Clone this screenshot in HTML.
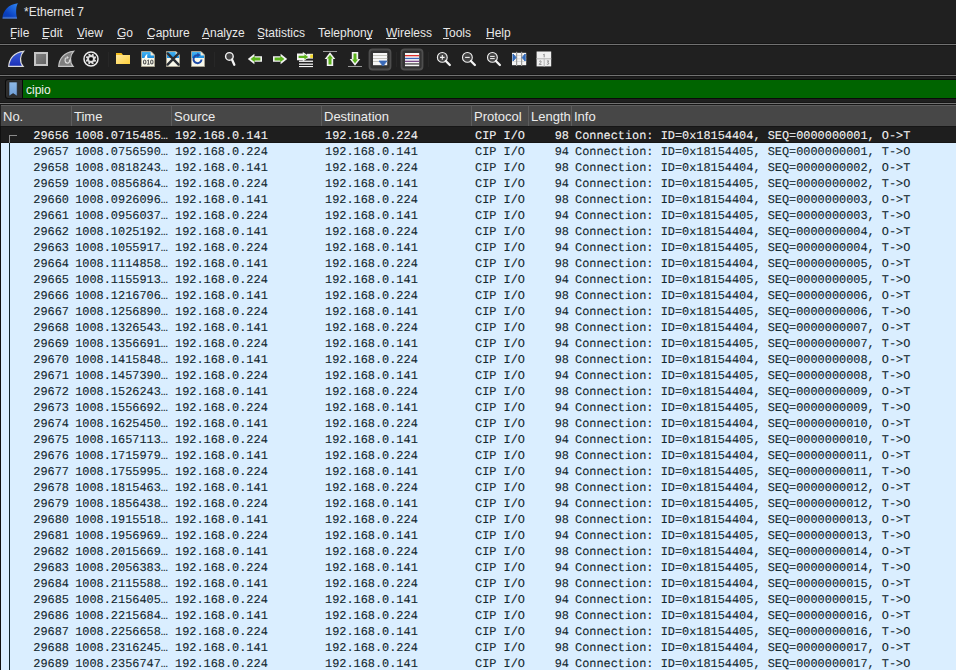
<!DOCTYPE html>
<html><head><meta charset="utf-8">
<style>
html,body{margin:0;padding:0}
body{width:956px;height:670px;overflow:hidden;position:relative;background:#202020;font-family:"Liberation Sans",sans-serif;font-size:12px;color:#e8e8e8}
.a{position:absolute;white-space:nowrap}
.title{left:24px;top:4px;-webkit-font-smoothing:antialiased;line-height:16px;font-size:12px;color:#e6e6e6}
.m{position:absolute;top:27px;line-height:12px;font-size:12px;color:#e8e8e8;white-space:nowrap}
.u{position:absolute;height:1px;background:#e0e0e0;top:38px}
.hl{position:absolute;left:0;width:956px;height:1px;background:#727272;box-shadow:0 -1px 0 #161616,0 1px 0 #161616}
.tb{position:absolute;top:45px;height:30px;left:0;width:956px;background:#202020}
.sep{position:absolute;top:52px;width:1px;height:15px;background:#2c2c2c}
.ic{position:absolute}
.filter{position:absolute;left:5px;top:79px;width:960px;height:20px;background:#0a0a0a;border-radius:3px}
.bm{position:absolute;left:6px;top:80px;width:16px;height:18px;background:#2e2e2e;border-radius:2px 0 0 2px}
.green{position:absolute;left:23px;top:80px;width:940px;height:18px;background:#006400}
.ftxt{position:absolute;left:26px;top:82px;line-height:16px;font-size:12px;color:#f0f0f0}
.hdr{position:absolute;left:1px;top:105px;width:955px;height:21px;background:#474747;border-top:1px solid #5e5e5e;box-sizing:border-box}
.hc{position:absolute;top:0px;height:20px;line-height:21px;font-size:13px;color:#ececec;padding-left:3px;box-sizing:border-box}
.hd{position:absolute;top:-1px;width:1px;height:21px;background:#5d5d5d}
.tbl{position:absolute;left:0;top:126px;width:956px;height:544px;background:#101010}
.r{position:absolute;left:1px;width:955px;height:16px;background:#daeeff;color:#12272e;font-family:"Liberation Mono",monospace;font-size:11.9px;line-height:16px;-webkit-text-stroke:0.1px currentColor;text-rendering:geometricPrecision}
.r.sel{background:#1e1e1e;color:#f2f2f2;height:17px;box-shadow:inset 0 1px 0 #161616,inset 0 -1px 0 #161616}
.r.sel .c{top:2px}
.c{position:absolute;top:1px;white-space:pre}
.no{right:auto;left:0;width:68px;text-align:right}
.tm{left:74.2px}
.sr{left:174px}
.ds{left:324px}
.pr{left:474px}
.ln{left:500px;width:68px;text-align:right}
.nf{left:574px}
.tree{position:absolute;left:9px;width:1px;background:#12272e}
</style></head><body>
<!-- title bar -->
<svg class="ic" style="left:0;top:0" width="22" height="22" viewBox="0 0 22 22">
<defs><linearGradient id="fg1" x1="1" y1="0" x2="0.2" y2="1"><stop offset="0" stop-color="#2f86f4"/><stop offset="0.75" stop-color="#0a40c0"/><stop offset="1" stop-color="#0a3cb0"/></linearGradient>
<linearGradient id="fg1b" x1="0" y1="0" x2="0" y2="1"><stop offset="0" stop-color="#5d8ee0" stop-opacity="0"/><stop offset="1" stop-color="#7aa4e8" stop-opacity="0.8"/></linearGradient></defs>
<path d="M2.3 18.4 C3 11, 8 4.5, 17.9 3.3 C16 6, 15.6 13, 17.1 18.4 Z" fill="url(#fg1)"/>
<path d="M2.6 18.4 L3 16.2 H16.7 L17.1 18.4 Z" fill="url(#fg1b)"/>
</svg>
<div class="a title">*Ethernet 7</div>
<!-- menu -->
<div class="m" style="left:10px">File</div><div class="u" style="left:11px;width:5px"></div>
<div class="m" style="left:42px">Edit</div><div class="u" style="left:42px;width:6px"></div>
<div class="m" style="left:77px">View</div><div class="u" style="left:77px;width:7px"></div>
<div class="m" style="left:117px">Go</div><div class="u" style="left:117px;width:8px"></div>
<div class="m" style="left:147px">Capture</div><div class="u" style="left:147px;width:7px"></div>
<div class="m" style="left:202px">Analyze</div><div class="u" style="left:202px;width:7px"></div>
<div class="m" style="left:257px">Statistics</div><div class="u" style="left:258px;width:6px"></div>
<div class="m" style="left:318px">Telephony</div><div class="u" style="left:366px;width:6px"></div>
<div class="m" style="left:386px">Wireless</div><div class="u" style="left:386px;width:11px"></div>
<div class="m" style="left:443px">Tools</div><div class="u" style="left:443px;width:6px"></div>
<div class="m" style="left:486px">Help</div><div class="u" style="left:486px;width:8px"></div>
<div class="hl" style="top:44px"></div>
<!-- toolbar -->
<svg class="ic" style="left:0;top:45px" width="956" height="30" viewBox="0 45 956 30">
<defs>
<linearGradient id="tfin" x1="0" y1="0" x2="0" y2="1"><stop offset="0" stop-color="#3d5fd8"/><stop offset="1" stop-color="#1a2fb8"/></linearGradient>
<linearGradient id="tstop" x1="0" y1="0" x2="1" y2="1"><stop offset="0" stop-color="#868686"/><stop offset="1" stop-color="#626262"/></linearGradient>
<linearGradient id="tfold" x1="0" y1="0" x2="1" y2="1"><stop offset="0" stop-color="#ffe9a0"/><stop offset="1" stop-color="#ffd03a"/></linearGradient>
<linearGradient id="tdocb" x1="0" y1="0" x2="0" y2="1"><stop offset="0" stop-color="#45b4f2"/><stop offset="1" stop-color="#1b8fe0"/></linearGradient>
</defs>
<!-- start capture fin -->
<path d="M8.7 66.4 C9.2 59 13.8 52.2 23.6 51.3 C20 55 19.2 62 23.1 66.4 Z" fill="url(#tfin)" stroke="#dcdcdc" stroke-width="1.2"/>
<!-- stop -->
<rect x="35" y="53" width="12" height="12" fill="url(#tstop)" stroke="#c6c6c6" stroke-width="2"/>
<!-- restart fin grey -->
<path d="M58.7 66.4 C59.2 59 63.8 52.2 73.6 51.3 C70 55 69.2 62 73.1 66.4 Z" fill="#7e7e7e" stroke="#c4c4c4" stroke-width="1.2"/>
<path d="M66.5 57.5 C64.5 58.5 64.5 62.5 67 63 C69 63.3 70 61.5 69.5 59.5" fill="none" stroke="#d8d8d8" stroke-width="1.3"/>
<path d="M66.8 55.8 L68.8 57.6 L66.6 59.2 Z" fill="#d8d8d8"/>
<!-- options gear -->
<circle cx="91" cy="59" r="7" fill="none" stroke="#ededed" stroke-width="1.5"/>
<path d="M89.95 53.81 L92.05 53.81 L92.26 55.31 L93.15 55.75 L93.93 54.58 L95.42 56.07 L94.50 57.28 L94.82 58.22 L96.19 57.95 L96.19 60.05 L94.69 60.26 L94.25 61.15 L95.42 61.93 L93.93 63.42 L92.72 62.50 L91.78 62.82 L92.05 64.19 L89.95 64.19 L89.74 62.69 L88.85 62.25 L88.07 63.42 L86.58 61.93 L87.50 60.72 L87.18 59.78 L85.81 60.05 L85.81 57.95 L87.31 57.74 L87.75 56.85 L86.58 56.07 L88.07 54.58 L89.28 55.50 L90.22 55.18 Z" fill="#dedede" transform="rotate(22.5 91 59)"/>
<rect x="89.2" y="57.2" width="3.6" height="3.6" rx="1" fill="#0c0c0c"/>
<!-- separator -->
<rect x="108" y="52" width="1" height="15" fill="#272727"/>
<!-- open folder -->
<path d="M116 53 H121.5 L123 55 H130 V64 H116 Z" fill="#f6bf1e"/>
<rect x="116" y="55" width="14" height="9" fill="url(#tfold)"/>
<!-- save (010) -->
<path d="M141.5 51.5 H151 L154.5 55 V66.5 H141.5 Z" fill="#f8f8ea" stroke="#a8a290" stroke-width="1"/>
<path d="M142 52 H150.8 V55.2 H154 V58 H142 Z" fill="url(#tdocb)"/>
<path d="M150.8 52 L154 55.2 H150.8 Z" fill="#f4ecd8"/>
<path d="M144.5 58 C145 56 146 54.5 147.5 54 C147 55.5 147 57 147.5 58 Z" fill="#ffffff"/>
<ellipse cx="144.7" cy="62" rx="1.25" ry="2" fill="none" stroke="#555" stroke-width="1.1"/>
<path d="M147.3 60.7 L148.4 59.9 V64.1 M147.2 64.2 H149.6" fill="none" stroke="#555" stroke-width="1"/>
<ellipse cx="151.8" cy="62" rx="1.25" ry="2" fill="none" stroke="#555" stroke-width="1.1"/>
<!-- close file -->
<path d="M166.5 51.5 H176 L179.5 55 V66.5 H166.5 Z" fill="#f8f8ea" stroke="#a8a290" stroke-width="1"/>
<path d="M167 52 H175.8 V55.2 H179 V58 H167 Z" fill="url(#tdocb)"/>
<path d="M175.8 52 L179 55.2 H175.8 Z" fill="#f4ecd8"/>
<path d="M167.6 53.4 L178.6 64.6 M178.6 53.4 L167.6 64.6" stroke="#2a2e33" stroke-width="2.4" stroke-linecap="round"/>
<!-- reload -->
<path d="M191.5 51.5 H201 L204.5 55 V66.5 H191.5 Z" fill="#f8f8ea" stroke="#a8a290" stroke-width="1"/>
<path d="M192 52 H200.8 V55.2 H204 V58 H192 Z" fill="url(#tdocb)"/>
<path d="M200.8 52 L204 55.2 H200.8 Z" fill="#f4ecd8"/>
<path d="M201.5 59.5 A4 4 0 1 1 198.2 55.2" fill="none" stroke="#1d4aa6" stroke-width="2"/>
<path d="M197.3 52.8 L200.6 55.1 L197.3 57.6 Z" fill="#1d4aa6"/>
<!-- separator -->
<rect x="214" y="52" width="1" height="15" fill="#272727"/>
<!-- find -->
<circle cx="229.4" cy="56.4" r="3.8" fill="#444" stroke="#f4f4f4" stroke-width="1.4"/>
<path d="M232 59.5 L234.3 64.8" stroke="#f4f4f4" stroke-width="2.3" stroke-linecap="round"/>
<!-- back -->
<path d="M247.8 59 L254.4 53.7 V56.3 H262 V61.7 H254.4 V64.3 Z" fill="#f2f2f2"/>
<path d="M250.6 59 L254.8 55.8 V57.6 H260.4 V60.4 H254.8 V62.2 Z" fill="#5cb41c"/>
<!-- forward -->
<path d="M287.2 59 L280.6 53.7 V56.3 H273 V61.7 H280.6 V64.3 Z" fill="#f2f2f2"/>
<path d="M284.4 59 L280.2 55.8 V57.6 H274.6 V60.4 H280.2 V62.2 Z" fill="#5cb41c"/>
<!-- go to packet -->
<rect x="299" y="60.6" width="14" height="1.3" fill="#f4f4f4"/>
<rect x="299" y="63.5" width="14" height="1.3" fill="#f4f4f4"/>
<rect x="299" y="66" width="14" height="1.1" fill="#f4f4f4"/>
<rect x="307" y="53.8" width="6" height="4.8" fill="#f4f4f4"/>
<rect x="310.2" y="54.5" width="2.8" height="3.4" fill="#f2d72c"/>
<path d="M297 53.6 H302.8 V52 L310 56.8 L302.8 61.6 V60.2 H297 Z" fill="#f4f4f4"/>
<path d="M298.6 55.7 H304.4 V54.2 L308.2 56.9 L304.4 59.6 V58.1 H298.6 Z" fill="#5cb41c"/>
<!-- first packet -->
<rect x="323" y="51" width="14" height="1" fill="#9a9a9a"/>
<path d="M330 52.2 L335.3 59 H333.2 V66 H326.8 V59 H324.7 Z" fill="#f2f2f2"/>
<path d="M330 54.8 L333 58.4 H331.5 V64.4 H328.5 V58.4 H327 Z" fill="#5cb41c"/>
<!-- last packet -->
<rect x="348" y="66" width="14" height="1" fill="#9a9a9a"/>
<path d="M355 65.8 L360.3 59 H358.2 V52 H351.8 V59 H349.7 Z" fill="#f2f2f2"/>
<path d="M355 63.2 L358 59.6 H356.5 V53.6 H353.5 V59.6 H352 Z" fill="#5cb41c"/>
<!-- autoscroll button -->
<rect x="369.5" y="49.5" width="21" height="20" rx="3" fill="#333333" stroke="#4e4e4e" stroke-width="1.8"/>
<rect x="373" y="53" width="14.2" height="12.2" fill="#f6f6f6"/>
<rect x="373" y="55" width="14.2" height="1" fill="#c4c4bc"/>
<rect x="373" y="58" width="14.2" height="1" fill="#c4c4bc"/>
<rect x="373" y="61" width="14.2" height="1" fill="#c4c4bc"/>
<path d="M379 61 H387 L383 66 Z" fill="#3a6ab8" stroke="#3a6ab8" stroke-width="0.8" stroke-linejoin="round"/>
<!-- separator -->
<rect x="396" y="52" width="1" height="15" fill="#272727"/>
<!-- colorize button -->
<rect x="401.5" y="49.5" width="21" height="20" rx="3" fill="#333333" stroke="#4e4e4e" stroke-width="1.8"/>
<rect x="405" y="53" width="14.2" height="13.2" fill="#f6f6f6"/>
<rect x="405" y="55" width="14.2" height="1.3" fill="#e0302c"/>
<rect x="405" y="57.8" width="14.2" height="1.3" fill="#3a66b8"/>
<rect x="405" y="60.7" width="14.2" height="1.3" fill="#7a4a88"/>
<rect x="405" y="63.4" width="14.2" height="1.1" fill="#262626"/>
<!-- separator -->
<rect x="428" y="52" width="1" height="15" fill="#272727"/>
<!-- zoom in -->
<circle cx="442.3" cy="57.4" r="4.9" fill="#444" stroke="#f0f0f0" stroke-width="1.1"/>
<path d="M445.8 61 L449.8 65" stroke="#f4f4f4" stroke-width="2.3" stroke-linecap="round"/>
<path d="M440 57.4 H444.6 M442.3 55.1 V59.7" stroke="#f4f4f4" stroke-width="1.1"/>
<!-- zoom out -->
<circle cx="467.4" cy="57.4" r="4.9" fill="#444" stroke="#f0f0f0" stroke-width="1.1"/>
<path d="M470.9 61 L474.9 65" stroke="#f4f4f4" stroke-width="2.3" stroke-linecap="round"/>
<path d="M465.1 57.4 H469.7" stroke="#f4f4f4" stroke-width="1.1"/>
<!-- zoom normal -->
<circle cx="492.4" cy="57.4" r="4.9" fill="#444" stroke="#f0f0f0" stroke-width="1.1"/>
<path d="M495.9 61 L499.9 65" stroke="#f4f4f4" stroke-width="2.3" stroke-linecap="round"/>
<path d="M490.1 56.4 H494.7 M490.1 58.6 H494.7" stroke="#f4f4f4" stroke-width="1"/>
<!-- resize columns -->
<rect x="512" y="52.8" width="14.2" height="12.4" fill="#f4f4f4"/>
<rect x="512" y="55" width="14.2" height="0.6" fill="#c8c8c8"/>
<rect x="512" y="58.6" width="14.2" height="0.6" fill="#c8c8c8"/>
<rect x="512" y="61.4" width="14.2" height="0.6" fill="#c8c8c8"/>
<rect x="516" y="51.8" width="1.2" height="14.2" fill="#9a9a98"/>
<rect x="521" y="51.8" width="1.2" height="14.2" fill="#9a9a98"/>
<path d="M513 54 L516 57.5 L513 61 Z" fill="#2f68b8" stroke="#2f68b8" stroke-width="1" stroke-linejoin="round"/>
<path d="M525.2 54 L522.2 57.5 L525.2 61 Z" fill="#2f68b8" stroke="#2f68b8" stroke-width="1" stroke-linejoin="round"/>
<!-- layout -->
<rect x="536.6" y="51.5" width="14.6" height="14.9" fill="#efefef"/>
<rect x="536.6" y="58" width="14.6" height="1.4" fill="#c4c4c4"/>
<rect x="543.6" y="58" width="1.3" height="8.4" fill="#c4c4c4"/>
<path d="M543.3 54.7 L544.2 54.1 V57.3" fill="none" stroke="#777" stroke-width="0.8"/>
<path d="M539.2 61.5 Q540.2 60.3 541.1 61.2 Q541.5 62.1 539.2 64.4 H541.5" fill="none" stroke="#777" stroke-width="0.8"/>
<path d="M546.9 60.9 H548.8 L547.6 62.4 Q549.1 62.6 548.8 63.8 Q548 64.8 546.7 64.1" fill="none" stroke="#777" stroke-width="0.8"/>
</svg>

<div class="hl" style="top:75px"></div>
<!-- filter -->
<div class="filter"></div>
<div class="bm"></div>
<svg class="ic" style="left:8px;top:81px" width="11" height="17" viewBox="0 0 11 17">
<defs><linearGradient id="bmg" x1="0" y1="0" x2="0" y2="1"><stop offset="0" stop-color="#8fb8e6"/><stop offset="1" stop-color="#6e9fd8"/></linearGradient></defs>
<path d="M1 1H9.2V15.2L5.1 12.6L1 15.2Z" fill="url(#bmg)" stroke="#1c1c1c" stroke-width="0.6"/>
</svg>
<div class="green"></div>
<div class="ftxt">cipio</div>
<div class="hl" style="top:103px"></div>
<!-- header -->
<div class="hdr">
<div class="hc" style="left:-1px;width:70px">No.</div>
<div class="hd" style="left:70px"></div>
<div class="hc" style="left:70px;width:100px">Time</div>
<div class="hd" style="left:170px"></div>
<div class="hc" style="left:170px;width:150px">Source</div>
<div class="hd" style="left:320px"></div>
<div class="hc" style="left:320px;width:150px">Destination</div>
<div class="hd" style="left:470px"></div>
<div class="hc" style="left:470px;width:57px">Protocol</div>
<div class="hd" style="left:527px"></div>
<div class="hc" style="left:527px;width:43px">Length</div>
<div class="hd" style="left:570px"></div>
<div class="hc" style="left:570px;width:300px">Info</div>
</div>
<div class="tbl"></div>
<div class="r sel" style="top:126px"><span class="c no">29656</span><span class="c tm">1008.0715485…</span><span class="c sr">192.168.0.141</span><span class="c ds">192.168.0.224</span><span class="c pr">CIP I/O</span><span class="c ln">98</span><span class="c nf">Connection: ID=0x18154404, SEQ=0000000001, O-&gt;T</span></div>
<div class="r" style="top:143px"><span class="c no">29657</span><span class="c tm">1008.0756590…</span><span class="c sr">192.168.0.224</span><span class="c ds">192.168.0.141</span><span class="c pr">CIP I/O</span><span class="c ln">94</span><span class="c nf">Connection: ID=0x18154405, SEQ=0000000001, T-&gt;O</span></div>
<div class="r" style="top:159px"><span class="c no">29658</span><span class="c tm">1008.0818243…</span><span class="c sr">192.168.0.141</span><span class="c ds">192.168.0.224</span><span class="c pr">CIP I/O</span><span class="c ln">98</span><span class="c nf">Connection: ID=0x18154404, SEQ=0000000002, O-&gt;T</span></div>
<div class="r" style="top:175px"><span class="c no">29659</span><span class="c tm">1008.0856864…</span><span class="c sr">192.168.0.224</span><span class="c ds">192.168.0.141</span><span class="c pr">CIP I/O</span><span class="c ln">94</span><span class="c nf">Connection: ID=0x18154405, SEQ=0000000002, T-&gt;O</span></div>
<div class="r" style="top:191px"><span class="c no">29660</span><span class="c tm">1008.0926096…</span><span class="c sr">192.168.0.141</span><span class="c ds">192.168.0.224</span><span class="c pr">CIP I/O</span><span class="c ln">98</span><span class="c nf">Connection: ID=0x18154404, SEQ=0000000003, O-&gt;T</span></div>
<div class="r" style="top:207px"><span class="c no">29661</span><span class="c tm">1008.0956037…</span><span class="c sr">192.168.0.224</span><span class="c ds">192.168.0.141</span><span class="c pr">CIP I/O</span><span class="c ln">94</span><span class="c nf">Connection: ID=0x18154405, SEQ=0000000003, T-&gt;O</span></div>
<div class="r" style="top:223px"><span class="c no">29662</span><span class="c tm">1008.1025192…</span><span class="c sr">192.168.0.141</span><span class="c ds">192.168.0.224</span><span class="c pr">CIP I/O</span><span class="c ln">98</span><span class="c nf">Connection: ID=0x18154404, SEQ=0000000004, O-&gt;T</span></div>
<div class="r" style="top:239px"><span class="c no">29663</span><span class="c tm">1008.1055917…</span><span class="c sr">192.168.0.224</span><span class="c ds">192.168.0.141</span><span class="c pr">CIP I/O</span><span class="c ln">94</span><span class="c nf">Connection: ID=0x18154405, SEQ=0000000004, T-&gt;O</span></div>
<div class="r" style="top:255px"><span class="c no">29664</span><span class="c tm">1008.1114858…</span><span class="c sr">192.168.0.141</span><span class="c ds">192.168.0.224</span><span class="c pr">CIP I/O</span><span class="c ln">98</span><span class="c nf">Connection: ID=0x18154404, SEQ=0000000005, O-&gt;T</span></div>
<div class="r" style="top:271px"><span class="c no">29665</span><span class="c tm">1008.1155913…</span><span class="c sr">192.168.0.224</span><span class="c ds">192.168.0.141</span><span class="c pr">CIP I/O</span><span class="c ln">94</span><span class="c nf">Connection: ID=0x18154405, SEQ=0000000005, T-&gt;O</span></div>
<div class="r" style="top:287px"><span class="c no">29666</span><span class="c tm">1008.1216706…</span><span class="c sr">192.168.0.141</span><span class="c ds">192.168.0.224</span><span class="c pr">CIP I/O</span><span class="c ln">98</span><span class="c nf">Connection: ID=0x18154404, SEQ=0000000006, O-&gt;T</span></div>
<div class="r" style="top:303px"><span class="c no">29667</span><span class="c tm">1008.1256890…</span><span class="c sr">192.168.0.224</span><span class="c ds">192.168.0.141</span><span class="c pr">CIP I/O</span><span class="c ln">94</span><span class="c nf">Connection: ID=0x18154405, SEQ=0000000006, T-&gt;O</span></div>
<div class="r" style="top:319px"><span class="c no">29668</span><span class="c tm">1008.1326543…</span><span class="c sr">192.168.0.141</span><span class="c ds">192.168.0.224</span><span class="c pr">CIP I/O</span><span class="c ln">98</span><span class="c nf">Connection: ID=0x18154404, SEQ=0000000007, O-&gt;T</span></div>
<div class="r" style="top:335px"><span class="c no">29669</span><span class="c tm">1008.1356691…</span><span class="c sr">192.168.0.224</span><span class="c ds">192.168.0.141</span><span class="c pr">CIP I/O</span><span class="c ln">94</span><span class="c nf">Connection: ID=0x18154405, SEQ=0000000007, T-&gt;O</span></div>
<div class="r" style="top:351px"><span class="c no">29670</span><span class="c tm">1008.1415848…</span><span class="c sr">192.168.0.141</span><span class="c ds">192.168.0.224</span><span class="c pr">CIP I/O</span><span class="c ln">98</span><span class="c nf">Connection: ID=0x18154404, SEQ=0000000008, O-&gt;T</span></div>
<div class="r" style="top:367px"><span class="c no">29671</span><span class="c tm">1008.1457390…</span><span class="c sr">192.168.0.224</span><span class="c ds">192.168.0.141</span><span class="c pr">CIP I/O</span><span class="c ln">94</span><span class="c nf">Connection: ID=0x18154405, SEQ=0000000008, T-&gt;O</span></div>
<div class="r" style="top:383px"><span class="c no">29672</span><span class="c tm">1008.1526243…</span><span class="c sr">192.168.0.141</span><span class="c ds">192.168.0.224</span><span class="c pr">CIP I/O</span><span class="c ln">98</span><span class="c nf">Connection: ID=0x18154404, SEQ=0000000009, O-&gt;T</span></div>
<div class="r" style="top:399px"><span class="c no">29673</span><span class="c tm">1008.1556692…</span><span class="c sr">192.168.0.224</span><span class="c ds">192.168.0.141</span><span class="c pr">CIP I/O</span><span class="c ln">94</span><span class="c nf">Connection: ID=0x18154405, SEQ=0000000009, T-&gt;O</span></div>
<div class="r" style="top:415px"><span class="c no">29674</span><span class="c tm">1008.1625450…</span><span class="c sr">192.168.0.141</span><span class="c ds">192.168.0.224</span><span class="c pr">CIP I/O</span><span class="c ln">98</span><span class="c nf">Connection: ID=0x18154404, SEQ=0000000010, O-&gt;T</span></div>
<div class="r" style="top:431px"><span class="c no">29675</span><span class="c tm">1008.1657113…</span><span class="c sr">192.168.0.224</span><span class="c ds">192.168.0.141</span><span class="c pr">CIP I/O</span><span class="c ln">94</span><span class="c nf">Connection: ID=0x18154405, SEQ=0000000010, T-&gt;O</span></div>
<div class="r" style="top:447px"><span class="c no">29676</span><span class="c tm">1008.1715979…</span><span class="c sr">192.168.0.141</span><span class="c ds">192.168.0.224</span><span class="c pr">CIP I/O</span><span class="c ln">98</span><span class="c nf">Connection: ID=0x18154404, SEQ=0000000011, O-&gt;T</span></div>
<div class="r" style="top:463px"><span class="c no">29677</span><span class="c tm">1008.1755995…</span><span class="c sr">192.168.0.224</span><span class="c ds">192.168.0.141</span><span class="c pr">CIP I/O</span><span class="c ln">94</span><span class="c nf">Connection: ID=0x18154405, SEQ=0000000011, T-&gt;O</span></div>
<div class="r" style="top:479px"><span class="c no">29678</span><span class="c tm">1008.1815463…</span><span class="c sr">192.168.0.141</span><span class="c ds">192.168.0.224</span><span class="c pr">CIP I/O</span><span class="c ln">98</span><span class="c nf">Connection: ID=0x18154404, SEQ=0000000012, O-&gt;T</span></div>
<div class="r" style="top:495px"><span class="c no">29679</span><span class="c tm">1008.1856438…</span><span class="c sr">192.168.0.224</span><span class="c ds">192.168.0.141</span><span class="c pr">CIP I/O</span><span class="c ln">94</span><span class="c nf">Connection: ID=0x18154405, SEQ=0000000012, T-&gt;O</span></div>
<div class="r" style="top:511px"><span class="c no">29680</span><span class="c tm">1008.1915518…</span><span class="c sr">192.168.0.141</span><span class="c ds">192.168.0.224</span><span class="c pr">CIP I/O</span><span class="c ln">98</span><span class="c nf">Connection: ID=0x18154404, SEQ=0000000013, O-&gt;T</span></div>
<div class="r" style="top:527px"><span class="c no">29681</span><span class="c tm">1008.1956969…</span><span class="c sr">192.168.0.224</span><span class="c ds">192.168.0.141</span><span class="c pr">CIP I/O</span><span class="c ln">94</span><span class="c nf">Connection: ID=0x18154405, SEQ=0000000013, T-&gt;O</span></div>
<div class="r" style="top:543px"><span class="c no">29682</span><span class="c tm">1008.2015669…</span><span class="c sr">192.168.0.141</span><span class="c ds">192.168.0.224</span><span class="c pr">CIP I/O</span><span class="c ln">98</span><span class="c nf">Connection: ID=0x18154404, SEQ=0000000014, O-&gt;T</span></div>
<div class="r" style="top:559px"><span class="c no">29683</span><span class="c tm">1008.2056383…</span><span class="c sr">192.168.0.224</span><span class="c ds">192.168.0.141</span><span class="c pr">CIP I/O</span><span class="c ln">94</span><span class="c nf">Connection: ID=0x18154405, SEQ=0000000014, T-&gt;O</span></div>
<div class="r" style="top:575px"><span class="c no">29684</span><span class="c tm">1008.2115588…</span><span class="c sr">192.168.0.141</span><span class="c ds">192.168.0.224</span><span class="c pr">CIP I/O</span><span class="c ln">98</span><span class="c nf">Connection: ID=0x18154404, SEQ=0000000015, O-&gt;T</span></div>
<div class="r" style="top:591px"><span class="c no">29685</span><span class="c tm">1008.2156405…</span><span class="c sr">192.168.0.224</span><span class="c ds">192.168.0.141</span><span class="c pr">CIP I/O</span><span class="c ln">94</span><span class="c nf">Connection: ID=0x18154405, SEQ=0000000015, T-&gt;O</span></div>
<div class="r" style="top:607px"><span class="c no">29686</span><span class="c tm">1008.2215684…</span><span class="c sr">192.168.0.141</span><span class="c ds">192.168.0.224</span><span class="c pr">CIP I/O</span><span class="c ln">98</span><span class="c nf">Connection: ID=0x18154404, SEQ=0000000016, O-&gt;T</span></div>
<div class="r" style="top:623px"><span class="c no">29687</span><span class="c tm">1008.2256658…</span><span class="c sr">192.168.0.224</span><span class="c ds">192.168.0.141</span><span class="c pr">CIP I/O</span><span class="c ln">94</span><span class="c nf">Connection: ID=0x18154405, SEQ=0000000016, T-&gt;O</span></div>
<div class="r" style="top:639px"><span class="c no">29688</span><span class="c tm">1008.2316245…</span><span class="c sr">192.168.0.141</span><span class="c ds">192.168.0.224</span><span class="c pr">CIP I/O</span><span class="c ln">98</span><span class="c nf">Connection: ID=0x18154404, SEQ=0000000017, O-&gt;T</span></div>
<div class="r" style="top:655px"><span class="c no">29689</span><span class="c tm">1008.2356747…</span><span class="c sr">192.168.0.224</span><span class="c ds">192.168.0.141</span><span class="c pr">CIP I/O</span><span class="c ln">94</span><span class="c nf">Connection: ID=0x18154405, SEQ=0000000017, T-&gt;O</span></div>
<div class="tree" style="top:135px;height:535px;background:#12272e"></div>
<div class="tree" style="top:135px;height:8px;background:#8a8a8a"></div>
<div style="position:absolute;left:9px;top:135px;width:8px;height:1px;background:#8a8a8a"></div>
</body></html>
